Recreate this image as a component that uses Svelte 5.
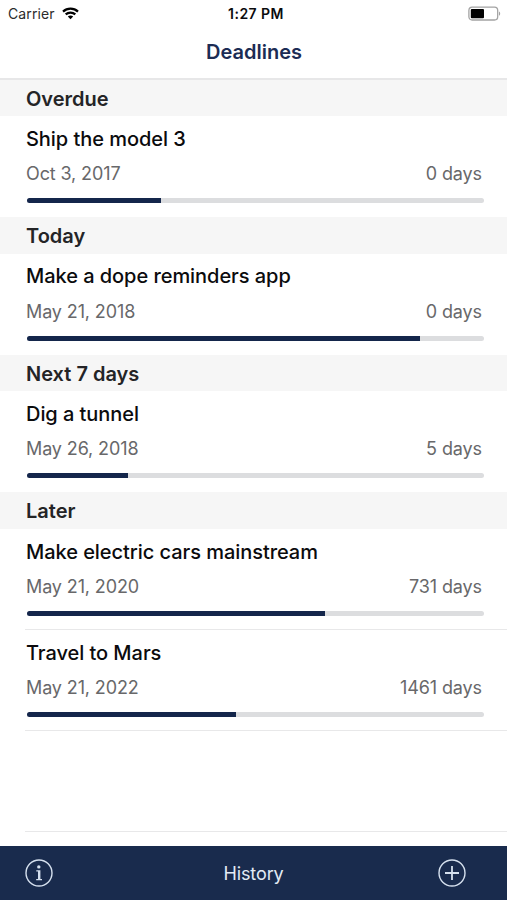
<script lang="ts">
    const sections = [
        {
            title: "Overdue",
            items: [{ name: "Ship the model 3", date: "Oct 3, 2017", days: 0, progress: 29.5 }],
        },
        {
            title: "Today",
            items: [{ name: "Make a dope reminders app", date: "May 21, 2018", days: 0, progress: 86 }],
        },
        {
            title: "Next 7 days",
            items: [{ name: "Dig a tunnel", date: "May 26, 2018", days: 5, progress: 22.3 }],
        },
        {
            title: "Later",
            items: [
                { name: "Make electric cars mainstream", date: "May 21, 2020", days: 731, progress: 65.3 },
                { name: "Travel to Mars", date: "May 21, 2022", days: 1461, progress: 45.8 },
            ],
        },
    ];
</script>

<div class="screen">
    <div class="status">
        <div class="carrier">
            <span>Carrier</span>
            <svg width="17" height="13" viewBox="0 0 17 13">
                <g fill="none" stroke="#000" stroke-width="2.2">
                    <path d="M1 4.6C5.2.6 11.8.6 16 4.6" />
                    <path d="M3.7 7.4c2.7-2.5 6.9-2.5 9.6 0" />
                </g>
                <path d="M8.5 12.2 5.8 9.5c1.5-1.4 3.9-1.4 5.4 0z" />
            </svg>
        </div>
        <div class="time">1:27 PM</div>
        <div class="battery">
            <svg width="34" height="16" viewBox="0 0 34 16">
                <rect x=".9" y="1.2" width="28.8" height="12.8" rx="3.2" fill="#fff" stroke="#a3a3a3" stroke-width="1.3" />
                <rect x="2.8" y="3" width="13.2" height="9.2" rx="1" />
                <path d="M31 5.4c1.6.7 1.6 3.6 0 4.3z" fill="#a3a3a3" />
            </svg>
        </div>
    </div>
    <h1>Deadlines</h1>

    <div class="list">
        {#each sections as section}
            <h2>{section.title}</h2>
            {#each section.items as item}
                <div class="item" class:divided={section.title == "Later"}>
                    <div class="name">{item.name}</div>
                    <div class="details">
                        <span class="date">{item.date}</span>
                        <span class="days">{item.days} days</span>
                    </div>
                    <div class="track">
                        <div class="fill" style="width: {item.progress}%"></div>
                    </div>
                </div>
            {/each}
        {/each}
        <div class="item divided"></div>
    </div>

    <div class="toolbar">
        <button aria-label="Info">
            <svg width="28" height="28" viewBox="0 0 28 28">
                <circle cx="14" cy="14" r="13" fill="none" stroke="#d5e0ee" stroke-width="1.4" />
                <circle cx="13.8" cy="7.9" r="1.7" fill="#d5e0ee" />
                <path d="M11.3 11.3h4.1v8.7h1.6v1.3h-5.8V20H13v-7.4h-1.7z" fill="#d5e0ee" />
            </svg>
        </button>
        <button class="history">History</button>
        <button class="add" aria-label="Add">
            <svg width="28" height="28" viewBox="0 0 28 28">
                <circle cx="14" cy="14" r="13" fill="none" stroke="#d5e0ee" stroke-width="1.4" />
                <path d="M14 7v14M7 14h14" stroke="#d5e0ee" stroke-width="1.8" />
            </svg>
        </button>
    </div>
</div>

<style>
    :global(body) {
        margin: 0;
        background: #fff;
    }
    * {
        box-sizing: border-box;
    }
    .screen {
        display: flex;
        flex-direction: column;
        width: 507px;
        height: 900px;
        overflow: hidden;
        font-family: Inter, "Liberation Sans", sans-serif;
        color: #0b0b0d;
    }
    .status {
        display: grid;
        grid-template-columns: 1fr auto 1fr;
        align-items: center;
        height: 27px;
        padding: 0 5px 0 8px;
        font-size: 14px;
        line-height: 27px;
    }
    .carrier {
        display: flex;
        align-items: center;
        gap: 7px;
        letter-spacing: 0.1px;
        color: #2b2b2b;
    }
    .time {
        padding-left: 2px;
        font-weight: 600;
        letter-spacing: 0.45px;
    }
    .battery {
        display: flex;
        justify-content: flex-end;
    }
    h1,
    h2 {
        margin: 0;
        font-weight: 600;
    }
    h1 {
        height: 52.5px;
        padding-left: 1px;
        border-bottom: 2px solid #e7e7e8;
        font-size: 20px;
        line-height: 51px;
        text-align: center;
        color: #1c2c54;
    }
    .list {
        flex: 1;
        min-height: 0;
        overflow: hidden;
    }
    h2 {
        height: 36.6px;
        padding-left: 26px;
        background: #f6f6f6;
        font-size: 20px;
        line-height: 38.5px;
        color: #242426;
    }
    .item {
        height: 101px;
        padding: 10.7px 24px 0 26px;
    }
    .divided {
        background: linear-gradient(#e8e8e9, #e8e8e9) 25px 100% / 100% 1px no-repeat;
    }
    .name {
        font-size: 20px;
        font-weight: 500;
        line-height: 25px;
        letter-spacing: -0.05px;
    }
    .details {
        display: flex;
        justify-content: space-between;
        padding: 10.3px 1px 0 0;
        font-size: 18px;
        line-height: 24px;
        color: #68686a;
    }
    .date {
        letter-spacing: -0.12px;
    }
    .days {
        letter-spacing: -0.1px;
    }
    .track {
        height: 5px;
        margin: 12px -0.5px 0 0.5px;
        border-radius: 3px;
        background: #dcdddf;
        overflow: hidden;
    }
    .fill {
        height: 100%;
        background: #14264b;
    }
    .toolbar {
        display: grid;
        grid-template-columns: 1fr auto 1fr;
        align-items: center;
        height: 54px;
        padding: 0 41px 0 25px;
        background: #192b4d;
    }
    button {
        display: flex;
        padding: 0;
        border: 0;
        background: none;
        font: inherit;
        color: #e3ebf5;
    }
    .history {
        padding-left: 16px;
        font-size: 18px;
        letter-spacing: -0.1px;
    }
    .add {
        justify-self: end;
    }
</style>
